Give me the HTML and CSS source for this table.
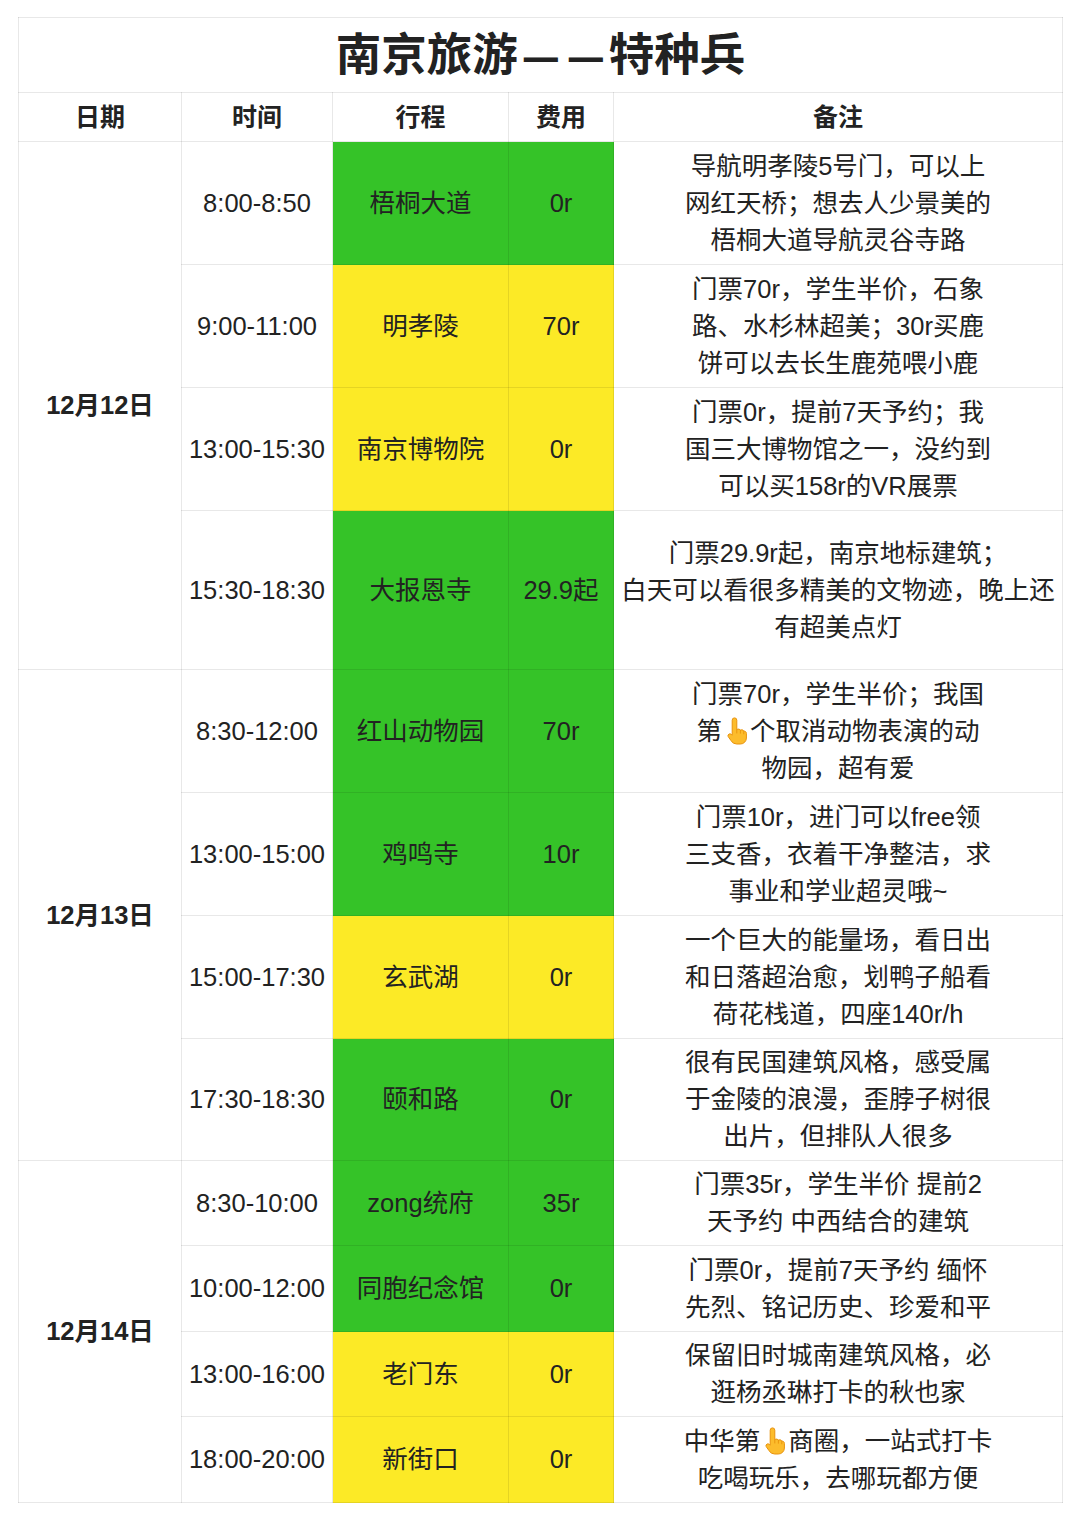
FILE: index.html
```html
<!DOCTYPE html>
<html lang="zh-CN">
<head>
<meta charset="utf-8">
<title>南京旅游——特种兵</title>
<link rel="stylesheet" href="styles.css">
</head>
<body>
<table class="plan">
  <colgroup>
    <col class="c-date"><col class="c-time"><col class="c-spot"><col class="c-cost"><col class="c-note">
  </colgroup>
  <tr class="r-title"><td colspan="5" class="title">南京旅游<span class="dash">—</span><span class="dash">—</span>特种兵</td></tr>
  <tr class="r-head"><th>日期</th><th>时间</th><th>行程</th><th>费用</th><th>备注</th></tr>

  <tr class="r-big">
    <td rowspan="4" class="date">12月12日</td>
    <td>8:00-8:50</td><td class="g">梧桐大道</td><td class="g">0r</td>
    <td class="note">导航明孝陵5号门，可以上<br>网红天桥；想去人少景美的<br>梧桐大道导航灵谷寺路</td>
  </tr>
  <tr class="r-big">
    <td>9:00-11:00</td><td class="y">明孝陵</td><td class="y">70r</td>
    <td class="note">门票70r，学生半价，石象<br>路、水杉林超美；30r买鹿<br>饼可以去长生鹿苑喂小鹿</td>
  </tr>
  <tr class="r-big">
    <td>13:00-15:30</td><td class="y">南京博物院</td><td class="y">0r</td>
    <td class="note">门票0r，提前7天予约；我<br>国三大博物馆之一，没约到<br>可以买158r的VR展票</td>
  </tr>
  <tr class="r-tall">
    <td>15:30-18:30</td><td class="g">大报恩寺</td><td class="g">29.9起</td>
    <td class="note">门票29.9r起，南京地标建筑；<br>白天可以看很多精美的文物迹，晚上还<br>有超美点灯</td>
  </tr>

  <tr class="r-big">
    <td rowspan="4" class="date">12月13日</td>
    <td>8:30-12:00</td><td class="g">红山动物园</td><td class="g">70r</td>
    <td class="note">门票70r，学生半价；我国<br>第<svg class="emoji" viewBox="0 0 22 28" aria-label="👆"><path d="M7.2 3.2a2.3 2.3 0 0 1 4.6 0V12.6c1.2-.9 3-.6 3.6.6 1.2-.8 3-.3 3.4 1 1.4-.3 2.6.7 2.6 2.2V21a6 6 0 0 1-6 6h-3.8a6.4 6.4 0 0 1-5.6-3.4L3.2 19.6a1.9 1.9 0 0 1 1-2.6c.9-.4 2 0 3 1.2Z" fill="#fcbc2c" stroke="#e8920c" stroke-width="1"/><path d="M11.8 12.6v3.4M15.4 13.2v3M18.8 14.2v2.6" stroke="#e8920c" stroke-width=".9" fill="none" stroke-linecap="round"/></svg>个取消动物表演的动<br>物园，超有爱</td>
  </tr>
  <tr class="r-big">
    <td>13:00-15:00</td><td class="g">鸡鸣寺</td><td class="g">10r</td>
    <td class="note">门票10r，进门可以free领<br>三支香，衣着干净整洁，求<br>事业和学业超灵哦~</td>
  </tr>
  <tr class="r-big">
    <td>15:00-17:30</td><td class="y">玄武湖</td><td class="y">0r</td>
    <td class="note">一个巨大的能量场，看日出<br>和日落超治愈，划鸭子船看<br>荷花栈道，四座140r/h</td>
  </tr>
  <tr class="r-big2">
    <td>17:30-18:30</td><td class="g">颐和路</td><td class="g">0r</td>
    <td class="note">很有民国建筑风格，感受属<br>于金陵的浪漫，歪脖子树很<br>出片，但排队人很多</td>
  </tr>

  <tr class="r-small">
    <td rowspan="4" class="date">12月14日</td>
    <td>8:30-10:00</td><td class="g">zong统府</td><td class="g">35r</td>
    <td class="note">门票35r，学生半价 提前2<br>天予约 中西结合的建筑</td>
  </tr>
  <tr class="r-small2">
    <td>10:00-12:00</td><td class="g">同胞纪念馆</td><td class="g">0r</td>
    <td class="note">门票0r，提前7天予约 缅怀<br>先烈、铭记历史、珍爱和平</td>
  </tr>
  <tr class="r-small">
    <td>13:00-16:00</td><td class="y">老门东</td><td class="y">0r</td>
    <td class="note">保留旧时城南建筑风格，必<br>逛杨丞琳打卡的秋也家</td>
  </tr>
  <tr class="r-small2">
    <td>18:00-20:00</td><td class="y">新街口</td><td class="y">0r</td>
    <td class="note">中华第<svg class="emoji" viewBox="0 0 22 28" aria-label="👆"><path d="M7.2 3.2a2.3 2.3 0 0 1 4.6 0V12.6c1.2-.9 3-.6 3.6.6 1.2-.8 3-.3 3.4 1 1.4-.3 2.6.7 2.6 2.2V21a6 6 0 0 1-6 6h-3.8a6.4 6.4 0 0 1-5.6-3.4L3.2 19.6a1.9 1.9 0 0 1 1-2.6c.9-.4 2 0 3 1.2Z" fill="#fcbc2c" stroke="#e8920c" stroke-width="1"/><path d="M11.8 12.6v3.4M15.4 13.2v3M18.8 14.2v2.6" stroke="#e8920c" stroke-width=".9" fill="none" stroke-linecap="round"/></svg>商圈，一站式打卡<br>吃喝玩乐，去哪玩都方便</td>
  </tr>
</table>
</body>
</html>
```

FILE: styles.css
```css
html, body {
  margin: 0;
  padding: 0;
  background: #ffffff;
}
body {
  padding: 17px 18px 0 18px;
  font-family: "Liberation Sans", "Noto Sans CJK SC", sans-serif;
  color: #222222;
}
.plan {
  border-collapse: collapse;
  table-layout: fixed;
  width: 1044px;
  font-size: 25.5px;
}
.c-date { width: 163px; }
.c-time { width: 151px; }
.c-spot { width: 176px; }
.c-cost { width: 105px; }
.c-note { width: 449px; }

.plan td, .plan th {
  border: 1px solid rgba(0, 0, 0, 0.09);
  text-align: center;
  vertical-align: middle;
  padding: 0;
  white-space: nowrap;
  line-height: 37px;
}
.plan th {
  font-weight: bold;
  font-size: 25px;
}
.title {
  font-size: 45.5px;
  font-weight: bold;
  line-height: 52px;
}
.dash {
  display: inline-block;
  transform: scaleX(0.75) translateY(1px);
}
.r-title { height: 75px; }
.r-head { height: 49px; }
.r-big { height: 123px; }
.r-big2 { height: 122px; }
.r-tall { height: 159px; }
.r-small { height: 85px; }
.r-small2 { height: 86px; }

.date {
  font-weight: bold;
}
.g { background: #35c328; }
.y { background: #fcea26; }
.emoji {
  width: 22px;
  height: 28px;
  vertical-align: -5px;
  margin: 0 3px;
}
```
